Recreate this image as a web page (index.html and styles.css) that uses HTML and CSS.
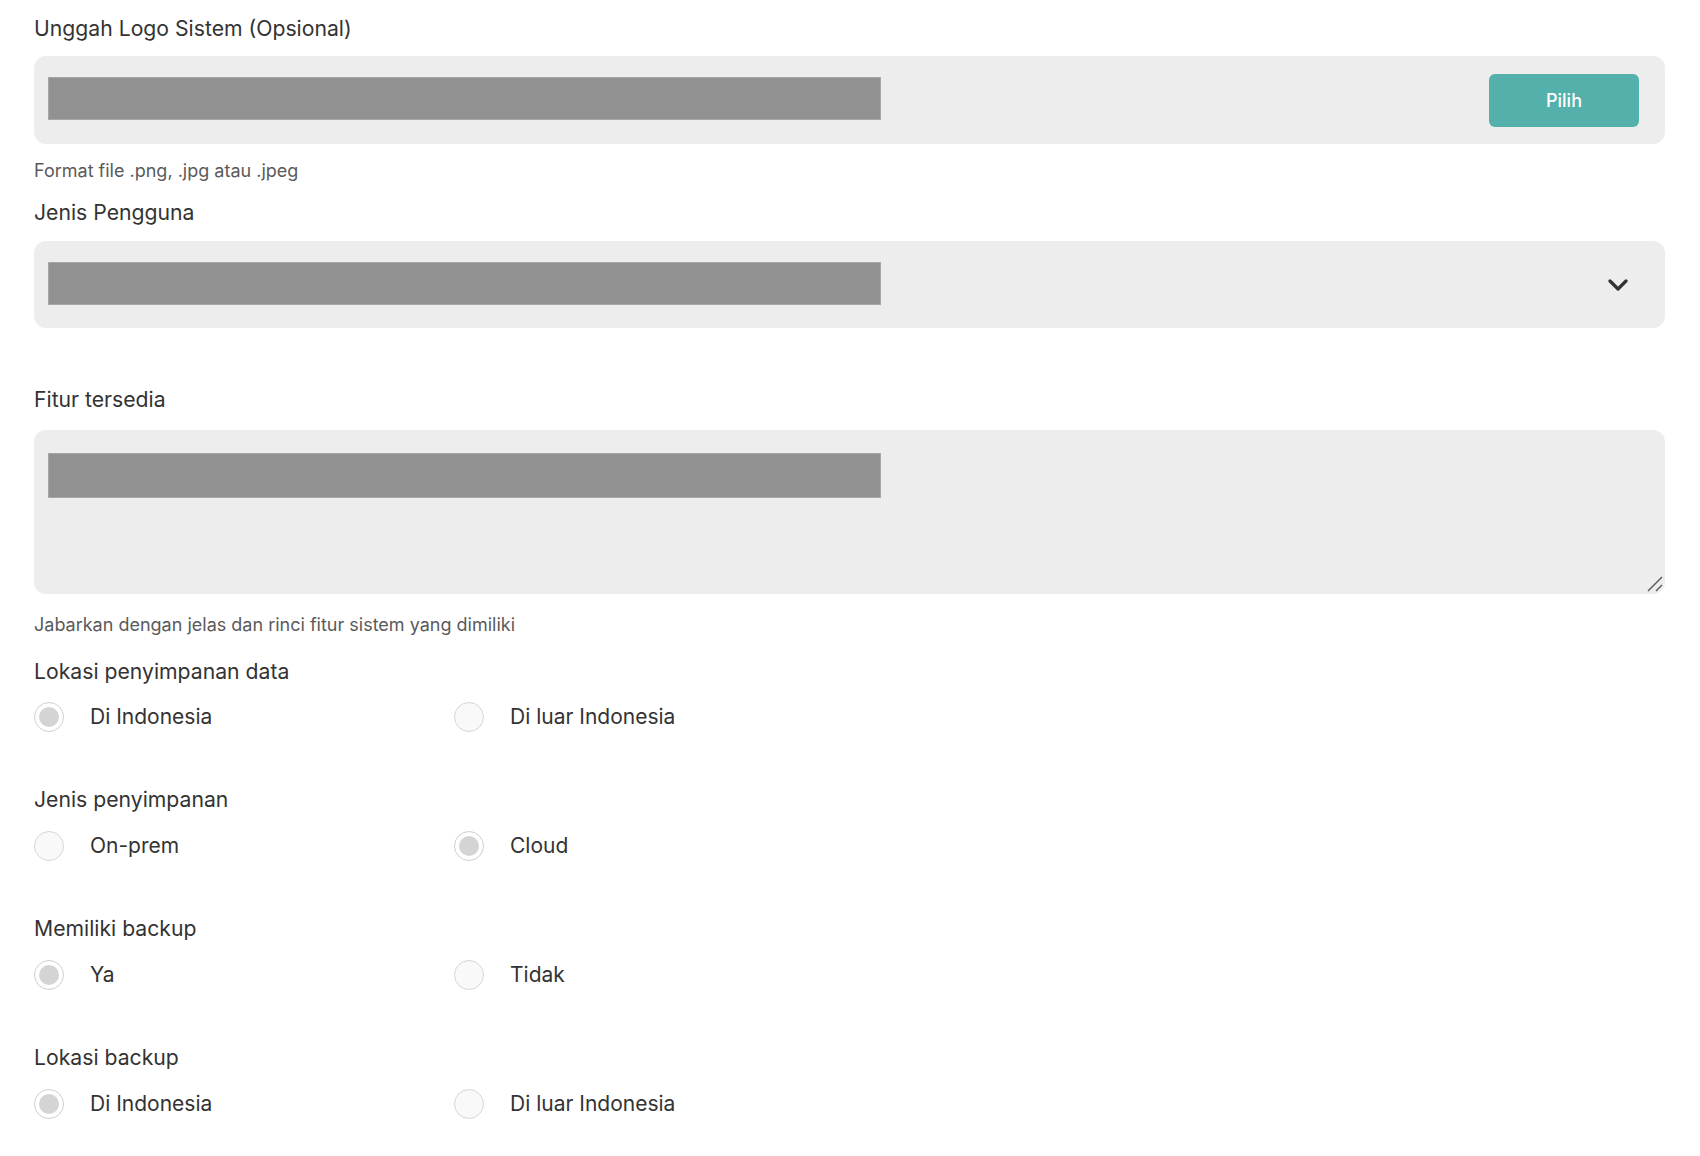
FILE: index.html
```html
<!DOCTYPE html>
<html lang="id">
<head>
<meta charset="utf-8">
<title>Form Sistem</title>
<link rel="stylesheet" href="styles.css">
</head>
<body>
<form class="form">
  <div class="field">
    <div class="label">Unggah Logo Sistem (Opsional)</div>
    <div class="box box-file">
      <div class="redact"></div>
      <button type="button" class="btn">Pilih</button>
    </div>
    <div class="help">Format file .png, .jpg atau .jpeg</div>
  </div>

  <div class="field field-select">
    <div class="label">Jenis Pengguna</div>
    <div class="box box-select">
      <div class="redact"></div>
      <svg class="chevron" width="20" height="12" viewBox="0 0 20 12"><path d="M2 2 L10 10 L18 2" fill="none" stroke="#333" stroke-width="3.2" stroke-linecap="round" stroke-linejoin="round"/></svg>
    </div>
  </div>

  <div class="field field-area">
    <div class="label">Fitur tersedia</div>
    <div class="box box-area">
      <div class="redact"></div>
      <svg class="grip" width="16" height="16" viewBox="0 0 16 16"><path d="M1 15 L15 1 M9 15 L15 9" fill="none" stroke="#555" stroke-width="1.4"/></svg>
    </div>
    <div class="help help-area">Jabarkan dengan jelas dan rinci fitur sistem yang dimiliki</div>
  </div>

  <div class="group group-first">
    <div class="label">Lokasi penyimpanan data</div>
    <div class="radios">
      <label class="radio"><span class="dot on"></span><span class="rtext">Di Indonesia</span></label>
      <label class="radio"><span class="dot"></span><span class="rtext">Di luar Indonesia</span></label>
    </div>
  </div>

  <div class="group">
    <div class="label">Jenis penyimpanan</div>
    <div class="radios">
      <label class="radio"><span class="dot"></span><span class="rtext">On-prem</span></label>
      <label class="radio"><span class="dot on"></span><span class="rtext">Cloud</span></label>
    </div>
  </div>

  <div class="group">
    <div class="label">Memiliki backup</div>
    <div class="radios">
      <label class="radio"><span class="dot on"></span><span class="rtext">Ya</span></label>
      <label class="radio"><span class="dot"></span><span class="rtext">Tidak</span></label>
    </div>
  </div>

  <div class="group">
    <div class="label">Lokasi backup</div>
    <div class="radios">
      <label class="radio"><span class="dot on"></span><span class="rtext">Di Indonesia</span></label>
      <label class="radio"><span class="dot"></span><span class="rtext">Di luar Indonesia</span></label>
    </div>
  </div>
</form>
</body>
</html>
```

FILE: styles.css
```css
* { box-sizing: border-box; }
html, body { margin: 0; padding: 0; background: #ffffff; }
body {
  font-family: Inter, "Noto Sans", sans-serif;
  color: #333333;
}
.form {
  width: 1665px;
  padding: 14px 0 40px 34px;
  display: flex;
  flex-direction: column;
}
.label {
  font-size: 21.2px;
  line-height: 28px;
  padding-bottom: 2px;
  color: #333333;
}
.box {
  background: #ededed;
  border-radius: 12px;
  margin-top: 12px;
  display: flex;
  align-items: center;
}
.box-file {
  height: 88px;
  padding: 0 26px 0 14px;
  justify-content: space-between;
}
.box-file .redact { margin-top: -3px; }
.redact {
  width: 833px;
  height: 43px;
  background: #919191;
  border: 1px solid #a6a6a6;
}
.btn {
  width: 150px;
  height: 53px;
  border: none;
  border-radius: 6px;
  background: #54b0ab;
  color: #ffffff;
  font-family: Inter, "Noto Sans", sans-serif;
  font-size: 18px;
  font-weight: 500;
  cursor: pointer;
}
.help {
  font-size: 18px;
  line-height: 24px;
  color: #5a5a5a;
  margin-top: 15px;
}
.field-select { margin-top: 15px; }
.box-select {
  height: 87px;
  padding: 0 37px 0 14px;
  justify-content: space-between;
  margin-top: 13px;
}
.box-select .redact { margin-top: -3px; }
.chevron { display: block; }
.field-area { margin-top: 57px; }
.box-area {
  position: relative;
  height: 164px;
  margin-top: 15px;
  padding: 23px 14px 0 14px;
  align-items: flex-start;
}
.box-area .redact { height: 45px; }
.grip {
  position: absolute;
  right: 2px;
  bottom: 2px;
}
.help-area { margin-top: 19px; }
.group { margin-top: 53px; }
.group-first { margin-top: 20px; }
.radios {
  margin-top: 15px;
  display: grid;
  grid-template-columns: 420px 420px;
}
.group-first .radios { margin-top: 14px; }
.radio {
  display: flex;
  align-items: center;
  height: 31px;
  gap: 26px;
}
.dot {
  width: 30px;
  height: 30px;
  border-radius: 50%;
  border: 1.5px solid #d6d6d6;
  background: #f9f9f9;
  display: flex;
  align-items: center;
  justify-content: center;
}
.dot.on { background: #ffffff; border-color: #cfcfcf; }
.dot.on::after {
  content: "";
  width: 20px;
  height: 20px;
  border-radius: 50%;
  background: #d4d4d4;
}
.rtext {
  font-size: 21px;
  color: #333333;
}
```
